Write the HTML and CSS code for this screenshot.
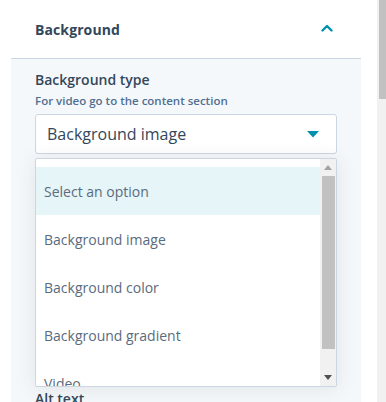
FILE: index.html
```html
<!DOCTYPE html>
<html>
<head>
<meta charset="utf-8">
<link rel="stylesheet" href="styles.css">
</head>
<body>
<div class="page">
  <div class="sidebar">
    <div class="section-head">
      <span class="section-title">Background</span>
      <svg class="chev" width="12" height="8" viewBox="0 0 12 8"><path d="M1.5 6.5 L6 2 L10.5 6.5" fill="none" stroke="#0091ae" stroke-width="2.4" stroke-linecap="round" stroke-linejoin="round"/></svg>
    </div>
    <div class="panel">
      <div class="field-label">Background type</div>
      <div class="help">For video go to the content section</div>
      <div class="select">
        <span>Background image</span>
        <svg class="caret" width="12" height="7" viewBox="0 0 12 7"><path d="M0 0 H12 L6 6.5 Z" fill="#0091ae"/></svg>
      </div>
      <div class="listbox">
        <div class="options">
          <div class="opt active">Select an option</div>
          <div class="opt">Background image</div>
          <div class="opt">Background color</div>
          <div class="opt">Background gradient</div>
          <div class="opt">Video</div>
        </div>
        <div class="lb-scroll">
          <div class="lb-arrow">
            <svg width="8" height="5" viewBox="0 0 8 5"><path d="M0 5 H8 L4 0 Z" fill="#a3a3a3"/></svg>
          </div>
          <div class="lb-thumb"></div>
          <div class="lb-fill"></div>
          <div class="lb-arrow">
            <svg width="8" height="5" viewBox="0 0 8 5"><path d="M0 0 H8 L4 5 Z" fill="#505050"/></svg>
          </div>
        </div>
      </div>
      <div class="field-label next">Alt text</div>
    </div>
  </div>
  <div class="page-scroll"><div class="page-thumb"></div></div>
</div>
</body>
</html>
```

FILE: styles.css
```css
* { box-sizing: border-box; }
html, body { margin: 0; padding: 0; height: 100%; overflow: hidden; background: #fff; }
body { font-family: "Open Sans", "Noto Sans", sans-serif; color: #33475b; }

.page { display: flex; height: 402px; overflow: hidden; }

.sidebar { width: 377px; flex-shrink: 0; padding: 0 16px 0 11px; display: flex; flex-direction: column; }

.section-head {
  flex-shrink: 0;
  height: 58px;
  display: flex;
  align-items: center;
  justify-content: space-between;
  padding: 0 28px 0 24px;
}
.section-title { font-size: 14px; font-weight: 700; color: #33475b; letter-spacing: 0.1px; }
.chev { display: block; margin-top: -3px; }

.panel {
  flex: 1 0 auto;
  background: #f5f8fa;
  border-top: 1px solid #cbd6e2;
  padding: 11px 24px 0;
}

.field-label { font-size: 14px; font-weight: 600; color: #33475b; line-height: 20px; }
.help { font-size: 11.5px; font-weight: 600; color: #516f90; line-height: 16px; margin-top: 3px; }

.select {
  margin-top: 5px;
  height: 40px;
  background: #fff;
  border: 1px solid #cbd6e2;
  border-radius: 3px;
  display: flex;
  align-items: center;
  justify-content: space-between;
  padding: 0 17px 0 11px;
  font-size: 16px;
  color: #33475b;
}

.listbox {
  margin-top: 4px;
  height: 229px;
  background: #fff;
  border: 1px solid #cbd6e2;
  border-radius: 2px;
  display: flex;
  overflow: hidden;
  box-shadow: 0 2px 20px rgba(45, 62, 80, 0.10);
}
.options { flex: 1; padding-top: 8px; overflow: hidden; }
.opt {
  height: 48px;
  display: flex;
  align-items: center;
  padding-left: 8px;
  font-size: 14px;
  color: #5a6b7d;
}
.opt.active { background: #e5f5f8; }

.lb-scroll { width: 16px; flex-shrink: 0; background: #f1f1f1; display: flex; flex-direction: column; }
.lb-arrow { height: 17px; flex-shrink: 0; display: flex; align-items: center; justify-content: center; }
.lb-thumb { height: 173px; flex-shrink: 0; margin: 0 1px 0 2px; background: #c1c1c1; }
.lb-fill { flex: 1; }

.field-label.next { margin-top: 2px; }

.page-scroll { width: 9px; flex-shrink: 0; background: #f1f1f1; padding-left: 2px; }
.page-thumb { height: 99px; background: #c1c1c1; }
```
